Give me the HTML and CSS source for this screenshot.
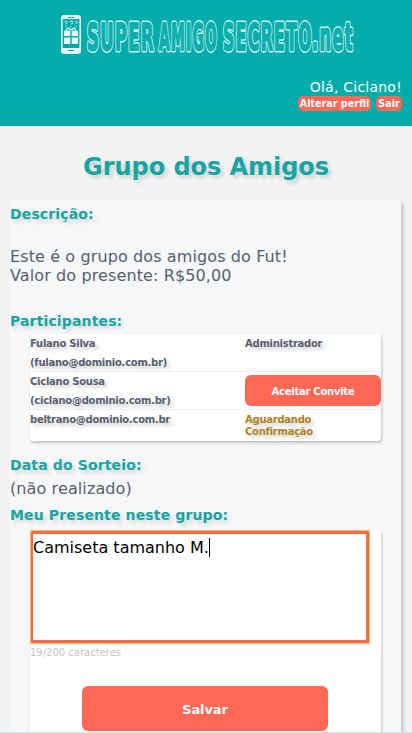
FILE: index.html
```html
<!DOCTYPE html>
<html lang="pt-BR">
<head>
    <title>Super Amigo Secreto</title>
    <meta charset="utf-8">
    <meta name="viewport" content="width=device-width, initial-scale=1">
    <link rel="stylesheet" href="styles.css">
</head>
<body>
    <header class="header">
        <svg class="logo" viewBox="0 0 300 48" role="img" aria-label="Super Amigo Secreto">
            <defs>
                <g id="logo-name">
                    <text x="27" y="36" textLength="68" lengthAdjust="spacingAndGlyphs">SUPER</text>
                    <text x="99" y="36" textLength="59" lengthAdjust="spacingAndGlyphs">AMIGO</text>
                    <text x="163" y="36" textLength="90" lengthAdjust="spacingAndGlyphs">SECRETO</text>
                    <text x="252" y="36" textLength="42" lengthAdjust="spacingAndGlyphs">.net</text>
                </g>
            </defs>
            <rect x="1.8" y="1.8" width="18.4" height="37.4" rx="2.5" fill="none" stroke="#e9f8f8" stroke-width="1.6"/>
            <path d="M2 2h18v3H2zM2 34h18v5H2z" fill="#e9f8f8"/>
            <path d="M8 3.5h6M8 36.5h6" stroke="#01acab" stroke-width="1"/>
            <path d="M4 16.5h6.3v5.5H4zM11.7 16.5H18V22h-6.3zM4 23.4h6.3V30H4zM11.7 23.4H18V30h-6.3z" fill="#e9f8f8"/>
            <path d="M11 16c-3-3-5-1.8-4 0M11 16c3-3 5-1.8 4 0" fill="none" stroke="#e9f8f8" stroke-width="1.2"/>
            <path d="M4.5 8.2c1-1.5 3-.8 2.5.6L5.8 10M5.8 11.5v1.2M9.5 8.2c1-2 3.5-1 3 .8L11 10.5M11 12v1.2M15 8.2c1-1.5 3-.8 2.5.6L16.3 10M16.3 11.5v1.2" fill="none" stroke="#e9f8f8" stroke-width="1"/>
            <use href="#logo-name" class="logo-outline"/>
            <use href="#logo-name" class="logo-fill"/>
        </svg>
        <div class="user">
            <div class="user-name">Olá, Ciclano!</div>
            <div class="user-actions">
                <a href="#" class="tag tag-profile">Alterar perfil</a>
                <a href="#" class="tag tag-exit">Sair</a>
            </div>
        </div>
    </header>
    <h1>Grupo dos Amigos</h1>
    <main class="card">
        <h2>Descrição:</h2>
        <p class="description">Este é o grupo dos amigos do Fut!<br>Valor do presente: R$50,00</p>
        <h2>Participantes:</h2>
        <div class="members">
            <div class="member">
                <div class="member-name">Fulano Silva<br>(fulano@dominio.com.br)</div>
                <div class="status">Administrador</div>
            </div>
            <div class="member">
                <div class="member-name">Ciclano Sousa<br>(ciclano@dominio.com.br)</div>
                <button class="button button-accept">Aceitar Convite</button>
            </div>
            <div class="member member-last">
                <div class="member-name">beltrano@dominio.com.br</div>
                <div class="status waiting">Aguardando Confirmação</div>
            </div>
        </div>
        <h2 class="draw-title">Data do Sorteio:</h2>
        <p class="draw">(não realizado)</p>
        <h2 class="gift-title">Meu Presente neste grupo:</h2>
        <form class="gift">
            <div class="gift-text" role="textbox"><span class="gift-value">Camiseta tamanho M.</span></div>
            <div class="counter">19/200 caracteres</div>
            <button type="button" class="button button-save">Salvar</button>
        </form>
    </main>
</body>
</html>
```
FILE: styles.css
```css
* {
    box-sizing: border-box;
}
body {
    font-family: Verdana, "DejaVu Sans", sans-serif;
    margin: 0;
    height: 733px;
    display: flex;
    flex-direction: column;
    overflow: hidden;
    background: #f1f3f5;
    border-bottom: 1px solid #dcdfe1;
    color: #57606f;
}
.header {
    flex-shrink: 0;
    height: 126px;
    background: #01acab;
    color: white;
    padding: 14px 10px 0;
}
.logo {
    display: block;
    width: 300px;
    height: 48px;
    margin-left: 50px;
    font-family: "DejaVu Sans Condensed", "DejaVu Sans", sans-serif;
    font-weight: bold;
    font-size: 37px;
    letter-spacing: 3px;
    stroke-linejoin: round;
}
.logo-outline {
    fill: #c4efee;
    stroke: #c4efee;
    stroke-width: 5px;
}
.logo-fill {
    fill: #0aaead;
    stroke: #0aaead;
    stroke-width: 1.8px;
}
.user {
    display: flex;
    flex-direction: column;
    align-items: flex-end;
    padding-top: 16px;
}
.user-name {
    font-size: 14px;
    line-height: 18px;
    letter-spacing: 0.23px;
}
.user-actions {
    display: flex;
    gap: 5px;
}
.tag {
    background: #ff6757;
    border-radius: 5px;
    color: white;
    font-size: 9.6px;
    font-weight: bold;
    line-height: 15px;
    height: 15px;
    text-align: center;
    text-decoration: none;
    white-space: nowrap;
}
.tag-profile {
    width: 73px;
}
.tag-exit {
    width: 26px;
}
h1 {
    margin: 27px 0 18px;
    font-size: 24px;
    line-height: 28px;
    letter-spacing: -0.05px;
    text-align: center;
    color: #17a5a3;
    text-shadow: 3px 3px 4px rgba(0, 0, 0, 0.15);
}
.card {
    flex: 1;
    min-height: 0;
    margin: 0 11px 0 10px;
    padding-top: 6px;
    display: flex;
    flex-direction: column;
    background: #f5f7f9;
    border-radius: 5px 5px 0 0;
    box-shadow: 3px 3px 3px rgba(0, 0, 0, 0.15);
}
h2 {
    margin: 0;
    font-size: 14px;
    line-height: 18px;
    letter-spacing: 0.14px;
    color: #17a5a3;
    text-shadow: 3px 3px 4px rgba(0, 0, 0, 0.15);
}
p {
    margin: 0;
    font-size: 16px;
    line-height: 19px;
    letter-spacing: 0.11px;
}
.description {
    padding: 24px 0 27px;
}
.members {
    width: 351px;
    height: 107px;
    margin: 4px 0 0 20px;
    background: white;
    border-radius: 4px;
    box-shadow: 1px 2px 3px rgba(0, 0, 0, 0.22);
    font-size: 10px;
    font-weight: bold;
    letter-spacing: -0.26px;
    text-shadow: 3px 3px 4px rgba(0, 0, 0, 0.2);
}
.member {
    display: flex;
    height: 38px;
    border-bottom: 1px solid #f1f2f4;
}
.member-last {
    height: 31px;
    border-bottom: none;
}
.member-name {
    width: 215px;
    line-height: 19px;
}
.status {
    padding-top: 4px;
    width: 110px;
    line-height: 12px;
}
.waiting {
    color: #b08020;
}
.button {
    border: none;
    background: #ff6757;
    color: white;
    font-family: inherit;
    font-weight: bold;
}
.button-accept {
    width: 136px;
    height: 31px;
    margin-top: 3px;
    padding: 2px 0 0;
    border-radius: 6px;
    font-size: 10px;
    letter-spacing: -0.26px;
}
.draw-title {
    margin-top: 15px;
}
.draw {
    padding: 5px 0 8px;
}
.gift {
    width: 351px;
    flex: 1;
    min-height: 0;
    margin: 6px 0 0 20px;
    background: white;
    border-radius: 4px 4px 0 0;
    box-shadow: 1px 2px 3px rgba(0, 0, 0, 0.22);
}
.gift-text {
    width: 340px;
    height: 114px;
    padding: 4px 0;
    border: 4px solid #f56b48;
    border-left-width: 3px;
    border-radius: 3px;
    outline: 1px solid #f9bb62;
    outline-offset: -1px;
    color: black;
    font-size: 16px;
    line-height: 19px;
}
.gift-value {
    display: inline-block;
    border-right: 1px solid black;
}
.counter {
    padding-top: 3px;
    font-size: 10px;
    line-height: 12px;
    color: #c5c5c5;
}
.button-save {
    display: block;
    width: 246px;
    height: 45px;
    margin: 27px 0 0 52px;
    padding: 2px 0 0;
    border-radius: 6px;
    font-size: 13px;
    letter-spacing: -0.1px;
}
```
